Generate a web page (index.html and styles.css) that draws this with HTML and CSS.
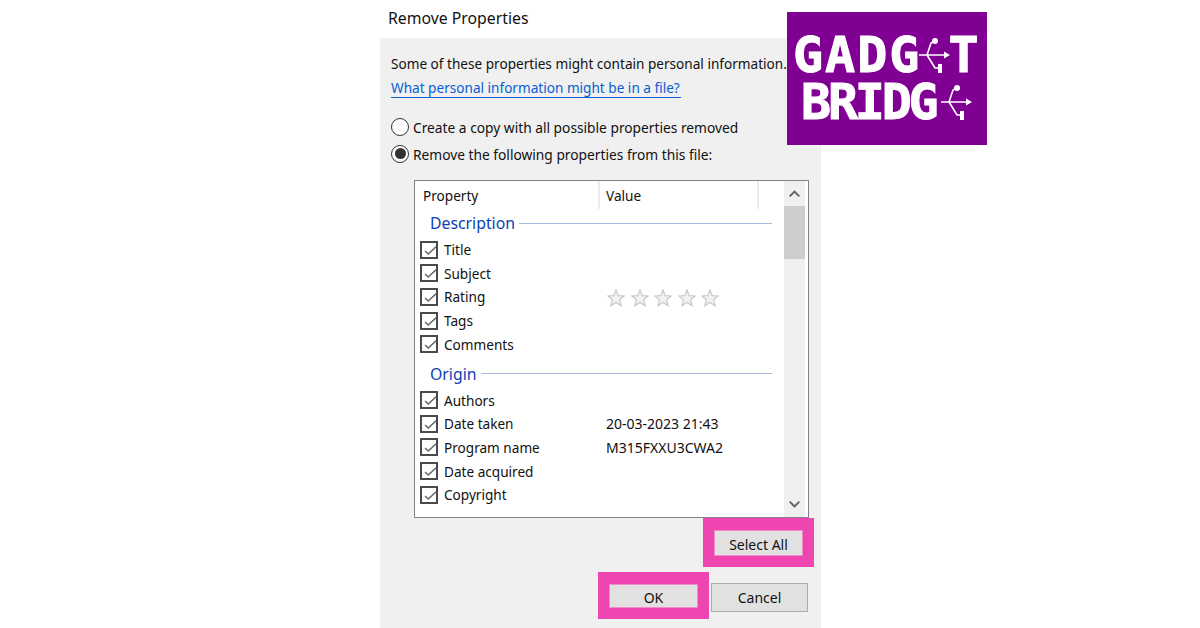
FILE: index.html
```html
<!DOCTYPE html>
<html lang="en">
<head>
    <meta charset="UTF-8">
    <title>Remove Properties</title>
    <link rel="stylesheet" href="styles.css">
</head>
<body>
    <div class="dialog">
        <div class="title">Remove Properties</div>
        <div class="panel">
            <p class="intro">Some of these properties might contain personal information.</p>
            <a class="link" href="#">What personal information might be in a file?</a>

            <div class="radio radio-first"><span class="radio-dot"></span><span class="radio-label">Create a copy with all possible properties removed</span></div>
            <div class="radio"><span class="radio-dot selected"></span><span class="radio-label">Remove the following properties from this file:</span></div>

            <div class="listbox">
                <div class="list-main">
                    <div class="list-head">
                        <div class="col-property">Property</div>
                        <div class="col-value">Value</div>
                    </div>

                    <div class="group group-first"><span>Description</span></div>
                    <div class="row"><svg class="check" viewBox="0 0 18 18"><path d="M3.9 10.3l4.2 3.8L18 4.8"/></svg><span class="name">Title</span></div>
                    <div class="row"><svg class="check" viewBox="0 0 18 18"><path d="M3.9 10.3l4.2 3.8L18 4.8"/></svg><span class="name">Subject</span></div>
                    <div class="row">
                        <svg class="check" viewBox="0 0 18 18"><path d="M3.9 10.3l4.2 3.8L18 4.8"/></svg><span class="name">Rating</span>
                        <div class="stars">
                            <svg class="star" viewBox="0 0 18 18"><path d="M9 1l2.2 5.6 6 .4-4.6 3.8 1.5 5.8L9 13.5l-5.1 3.1 1.5-5.8L.8 7l6-.4z"/></svg>
                            <svg class="star" viewBox="0 0 18 18"><path d="M9 1l2.2 5.6 6 .4-4.6 3.8 1.5 5.8L9 13.5l-5.1 3.1 1.5-5.8L.8 7l6-.4z"/></svg>
                            <svg class="star" viewBox="0 0 18 18"><path d="M9 1l2.2 5.6 6 .4-4.6 3.8 1.5 5.8L9 13.5l-5.1 3.1 1.5-5.8L.8 7l6-.4z"/></svg>
                            <svg class="star" viewBox="0 0 18 18"><path d="M9 1l2.2 5.6 6 .4-4.6 3.8 1.5 5.8L9 13.5l-5.1 3.1 1.5-5.8L.8 7l6-.4z"/></svg>
                            <svg class="star" viewBox="0 0 18 18"><path d="M9 1l2.2 5.6 6 .4-4.6 3.8 1.5 5.8L9 13.5l-5.1 3.1 1.5-5.8L.8 7l6-.4z"/></svg>
                        </div>
                    </div>
                    <div class="row"><svg class="check" viewBox="0 0 18 18"><path d="M3.9 10.3l4.2 3.8L18 4.8"/></svg><span class="name">Tags</span></div>
                    <div class="row"><svg class="check" viewBox="0 0 18 18"><path d="M3.9 10.3l4.2 3.8L18 4.8"/></svg><span class="name">Comments</span></div>

                    <div class="group"><span>Origin</span></div>
                    <div class="row"><svg class="check" viewBox="0 0 18 18"><path d="M3.9 10.3l4.2 3.8L18 4.8"/></svg><span class="name">Authors</span></div>
                    <div class="row"><svg class="check" viewBox="0 0 18 18"><path d="M3.9 10.3l4.2 3.8L18 4.8"/></svg><span class="name">Date taken</span><span class="value">20-03-2023 21:43</span></div>
                    <div class="row"><svg class="check" viewBox="0 0 18 18"><path d="M3.9 10.3l4.2 3.8L18 4.8"/></svg><span class="name">Program name</span><span class="value">M315FXXU3CWA2</span></div>
                    <div class="row"><svg class="check" viewBox="0 0 18 18"><path d="M3.9 10.3l4.2 3.8L18 4.8"/></svg><span class="name">Date acquired</span></div>
                    <div class="row"><svg class="check" viewBox="0 0 18 18"><path d="M3.9 10.3l4.2 3.8L18 4.8"/></svg><span class="name">Copyright</span></div>
                </div>
                <div class="scrollbar">
                    <svg class="arrow" viewBox="0 0 21 26"><path d="M5.5 16l5-5 5 5"/></svg>
                    <div class="thumb"></div>
                    <div class="track"></div>
                    <svg class="arrow" viewBox="0 0 21 26"><path d="M5.5 10l5 5 5-5"/></svg>
                </div>
            </div>

            <div class="actions actions-select">
                <div class="highlight"><button class="btn">Select All</button></div>
            </div>
            <div class="actions actions-ok">
                <div class="highlight"><button class="btn">OK</button></div>
                <button class="btn btn-cancel">Cancel</button>
            </div>
        </div>
    </div>

    <div class="logo">
        <div class="logo-line">
            <span>GADG</span>
            <svg class="usb" viewBox="0 0 33 37"><path d="M1 18h29M9 18L13 6l4-2M9 18l8 13h6"/><path class="usb-head" d="M32 18l-6-3.5v7z"/><circle class="usb-head" cx="17" cy="4" r="3"/><rect class="usb-head" x="20" y="27" width="4" height="9"/></svg>
            <span class="logo-t">T</span>
        </div>
        <div class="logo-line logo-line-second">
            <span>BRIDG</span>
            <svg class="usb" viewBox="0 0 33 37"><path d="M1 18h29M9 18L13 6l4-2M9 18l8 13h6"/><path class="usb-head" d="M32 18l-6-3.5v7z"/><circle class="usb-head" cx="17" cy="4" r="3"/><rect class="usb-head" x="20" y="27" width="4" height="9"/></svg>
        </div>
    </div>
</body>
</html>
```

FILE: styles.css
```css
body {
    margin: 0;
    height: 628px;
    overflow: hidden;
    background-color: white;
    font-family: 'Noto Sans', sans-serif;
    font-size: 13.6px;
    color: #111;
}

.dialog {
    width: 441px;
    height: 628px;
    margin-left: 380px;
    display: flex;
    flex-direction: column;
}

.title {
    height: 38px;
    line-height: 36px;
    padding-left: 8px;
    font-size: 15.8px;
    flex: none;
}

.panel {
    flex: 1;
    background-color: #f0f0f0;
    padding: 0 7px 0 11px;
}

.intro {
    margin: 0;
    padding-top: 16px;
    line-height: 20px;
    white-space: nowrap;
}

.link {
    display: block;
    margin-top: 4px;
    line-height: 20px;
    color: #0a5fd0;
    text-decoration: none;
    border-bottom: 1px solid #0a5fd0;
    width: 290px;
    height: 19px;
    white-space: nowrap;
}

.radio {
    display: flex;
    align-items: center;
    gap: 4px;
    height: 27px;
}

.radio-first {
    margin-top: 15px;
}

.radio-label {
    font-size: 13.75px;
    padding-top: 1px;
}

.radio-dot {
    width: 16px;
    height: 16px;
    border: 1px solid #333;
    border-radius: 50%;
    background-color: white;
    flex: none;
    position: relative;
}

.radio-dot.selected::after {
    content: '';
    position: absolute;
    top: 2.5px;
    left: 2.5px;
    width: 11px;
    height: 11px;
    border-radius: 50%;
    background-color: #333;
}

.listbox {
    display: flex;
    width: 393px;
    height: 336px;
    margin: 13px 0 0 23px;
    background-color: white;
    border: 1px solid #82828f;
}

.list-main {
    flex: 1;
}

.list-head {
    display: flex;
    height: 28px;
    line-height: 30px;
}

.col-property {
    width: 175px;
    padding-left: 8px;
    border-right: 2px solid #ececec;
}

.col-value {
    width: 151px;
    padding-left: 6px;
    border-right: 2px solid #ececec;
}

.group {
    display: flex;
    align-items: center;
    gap: 4px;
    height: 24px;
    margin: 6px 12px 2.5px 15px;
    font-size: 15.8px;
    color: #0b3fb5;
}

.group-first {
    margin-top: 2px;
    margin-bottom: 3px;
}

.group::after {
    content: '';
    flex: 1;
    height: 1px;
    background-color: #a9b8dc;
}

.row {
    display: flex;
    align-items: center;
    height: 23.6px;
    padding-left: 5px;
}

.check {
    width: 18px;
    height: 18px;
    box-sizing: border-box;
    border: 2px solid #4a4a4a;
    background-color: white;
    flex: none;
}

.check path {
    fill: none;
    stroke: #666;
    stroke-width: 2;
}

.name {
    margin-left: 6px;
    width: 162px;
    flex: none;
}

.value {
    font-size: 14px;
    white-space: nowrap;
}

.stars {
    display: flex;
    gap: 5.6px;
    padding: 2px 0 0 1px;
}

.star {
    width: 18px;
    height: 18px;
}

.star path {
    fill: #f2f2f2;
    stroke: #c8c8c8;
    stroke-width: 1.2;
}

.scrollbar {
    width: 21px;
    display: flex;
    flex-direction: column;
    background-color: #f0f0f0;
    margin-right: 3px;
}

.arrow {
    width: 21px;
    height: 25px;
    flex: none;
}

.arrow path {
    fill: none;
    stroke: #606060;
    stroke-width: 2;
}

.thumb {
    height: 53px;
    background-color: #cdcdcd;
    flex: none;
}

.track {
    flex: 1;
}

.actions {
    display: flex;
    justify-content: flex-end;
}

.actions-ok {
    gap: 2px;
    margin-top: 5px;
    padding-right: 6px;
}

.highlight {
    border: 11px solid #ef45b0;
    border-top-width: 12px;
    height: 24px;
    display: flex;
}

.actions-select .highlight {
    height: 26px;
}

.btn {
    width: 89px;
    font-family: inherit;
    font-size: 14px;
    color: #111;
    background-color: #e1e1e1;
    border: 1px solid #f08ccb;
    padding: 2px 0 0;
}

.btn-cancel {
    width: 97px;
    height: 29px;
    margin-top: 11px;
    border: 1px solid #adadad;
    padding-top: 0;
}

.logo {
    position: absolute;
    top: 12px;
    left: 787px;
    width: 200px;
    height: 133px;
    box-sizing: border-box;
    padding: 24px 0 0 6px;
    background-color: #800094;
    color: white;
    font-family: 'DejaVu Sans Mono', monospace;
    font-weight: bold;
    font-size: 50px;
    -webkit-text-stroke: 1px white;
}

.logo-line {
    display: flex;
    align-items: center;
    height: 38px;
    letter-spacing: 2px;
}

.logo-line .usb {
    margin-left: -3px;
}

.logo-t {
    margin-left: -3px;
    letter-spacing: 0;
}

.logo-line-second {
    margin-top: 9px;
    padding-left: 8px;
    letter-spacing: -3.2px;
}

.logo-line-second .usb {
    margin-left: 4px;
}

.usb {
    width: 33px;
    height: 37px;
    flex: none;
}

.usb path {
    fill: none;
    stroke: white;
    stroke-width: 1.6;
}

.usb .usb-head {
    fill: white;
    stroke: none;
}
```
